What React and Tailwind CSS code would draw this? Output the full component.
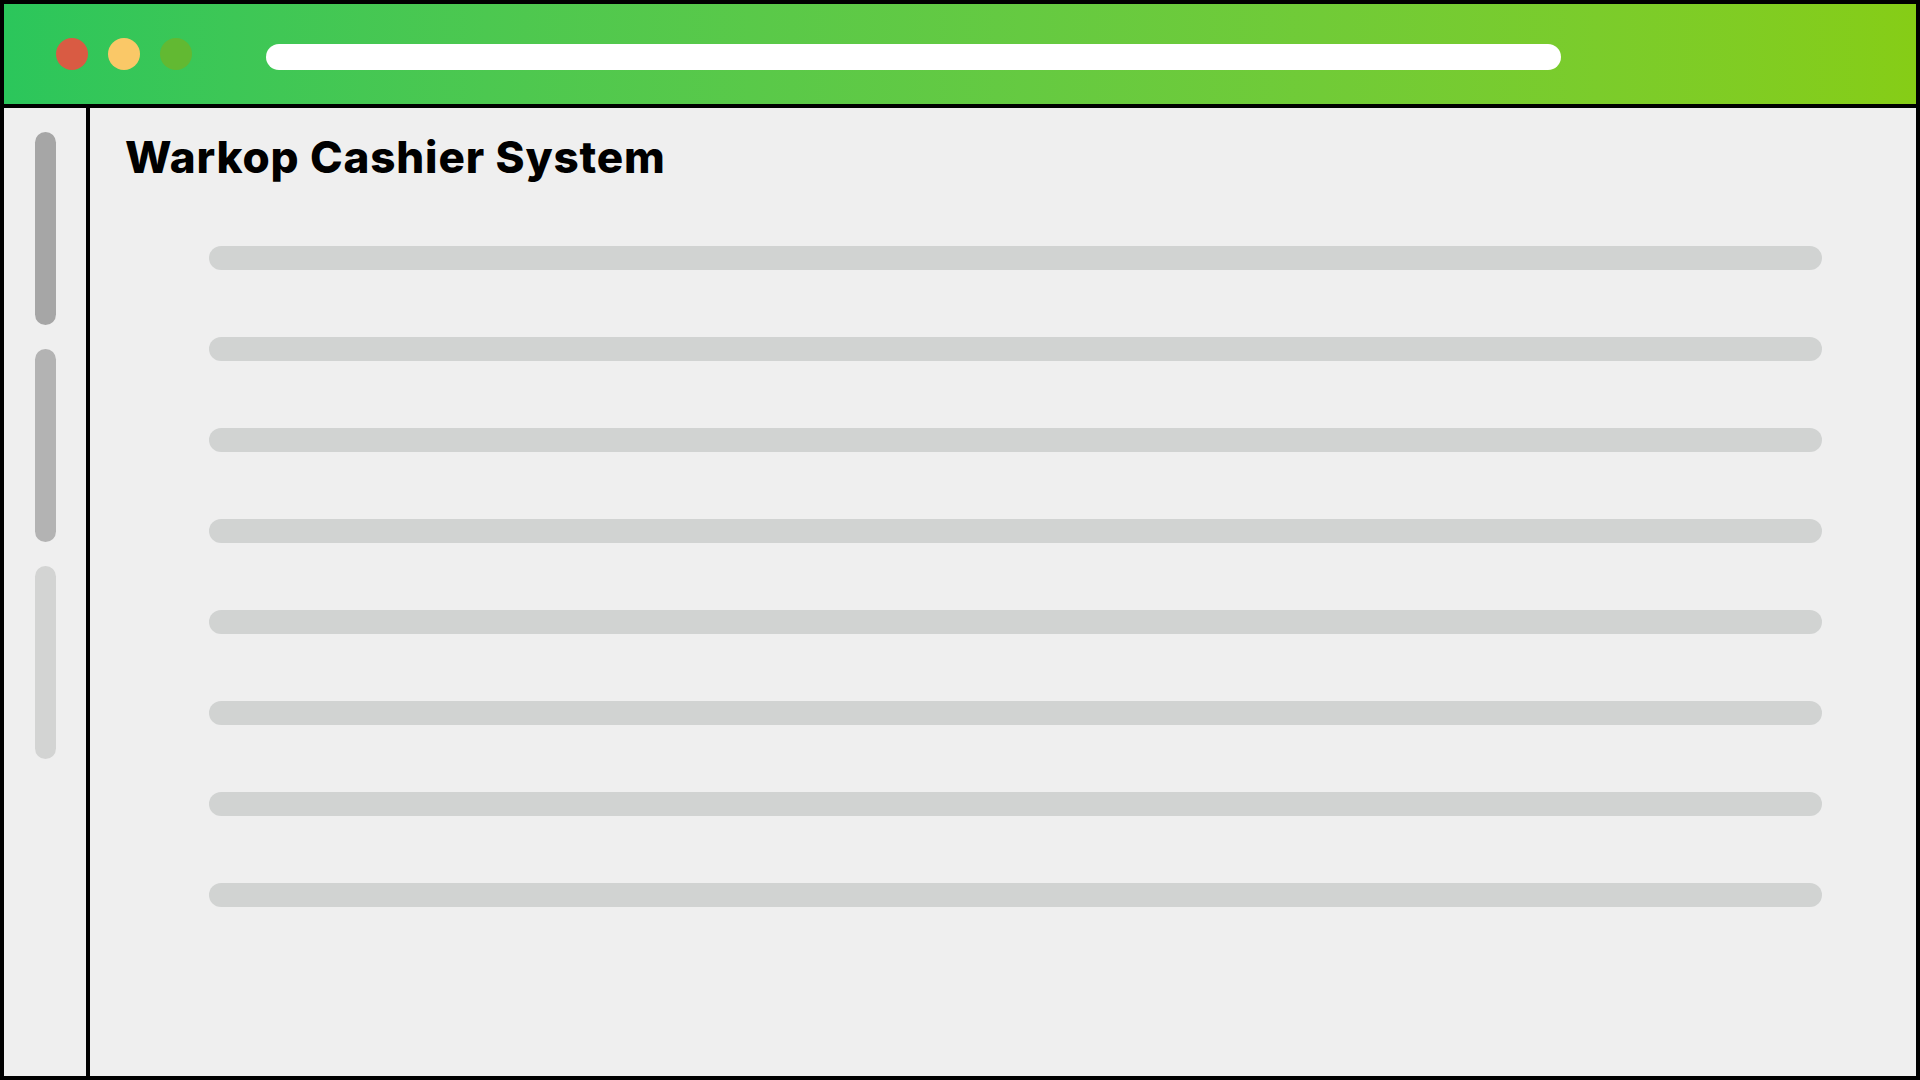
import React from "react";

const sideBars = ["bg-[#a6a6a6]", "bg-[#b3b3b3]", "bg-[#d3d4d3]"];
const lines = [0, 1, 2, 3, 4, 5, 6, 7];

const App = () => {
  return (
    <div className="w-[1920px] h-[1080px] border-4 border-black bg-[#efefef] flex flex-col overflow-hidden">
      {/* top bar */}
      <header className="h-[104px] shrink-0 border-b-4 border-black bg-gradient-to-r from-[#2bc65b] to-[#86cd16] flex items-start pl-[52px]">
        <div className="flex gap-[20px] mt-[34px]">
          <span className="w-[32px] h-[32px] rounded-full bg-[#d95b43]" />
          <span className="w-[32px] h-[32px] rounded-full bg-[#fac867]" />
          <span className="w-[32px] h-[32px] rounded-full bg-[#62b932]" />
        </div>
        <div className="ml-[74px] mt-[40px] w-[1295px] h-[26px] rounded-full bg-white" />
      </header>

      <div className="flex flex-1 min-h-0">
        {/* sidebar */}
        <aside className="w-[86px] shrink-0 border-r-4 border-black flex flex-col items-center gap-[24px] pt-[24px]">
          {sideBars.map((c) => (
            <div key={c} className={`w-[21px] h-[193px] rounded-full ${c}`} />
          ))}
        </aside>

        {/* main */}
        <main className="flex-1 pt-[27px] pl-[35px] pr-[94px]">
          <h1
            className="text-[44px] leading-[44px] font-extrabold text-black tracking-[0.85px]"
            style={{ fontFamily: "Inter, 'Noto Sans', sans-serif" }}
          >
            Warkop Cashier System
          </h1>
          <div className="mt-[67px] ml-[84px] flex flex-col gap-[67px]">
            {lines.map((i) => (
              <div key={i} className="h-[24px] rounded-full bg-[#d1d3d2]" />
            ))}
          </div>
        </main>
      </div>
    </div>
  );
};

export default App;
